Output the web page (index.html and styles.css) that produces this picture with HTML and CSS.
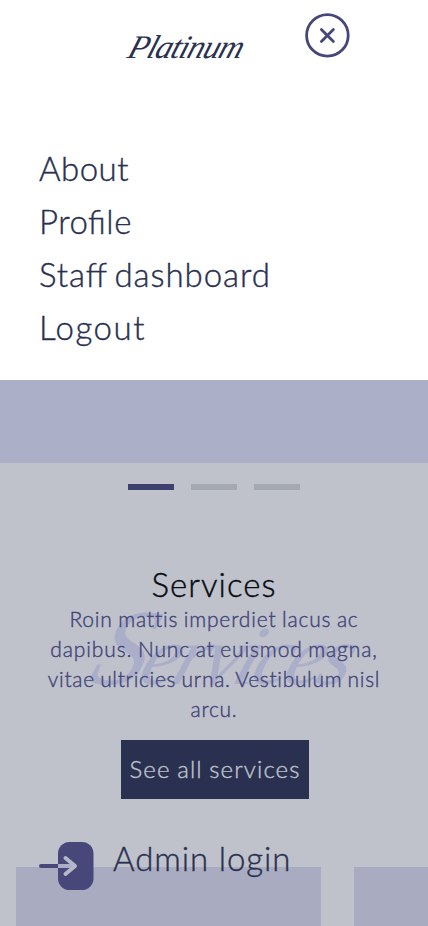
FILE: index.html
```
<!DOCTYPE html>
<html lang="en">
<head>
<meta charset="utf-8">
<meta name="viewport" content="width=device-width, initial-scale=1">
<title>Platinum</title>
<link rel="stylesheet" href="styles.css">
</head>
<body>
<main class="page">
  <section class="hero"></section>
  <div class="slides"><span class="slide active"></span><span class="slide"></span><span class="slide"></span></div>
  <section class="services">
    <h1 class="title">Services</h1>
    <div class="copy">
      <span class="watermark" aria-hidden="true"><span class="initial">S</span>ervices</span>
      <p class="line l1">Roin mattis imperdiet lacus ac</p>
      <p class="line l2">dapibus. Nunc at euismod magna,</p>
      <p class="line l3">vitae ultricies urna. Vestibulum nisl</p>
      <p class="line l4">arcu.</p>
    </div>
    <a class="button">See all services</a>
  </section>
  <div class="cards"><div class="card"></div><div class="card"></div></div>
</main>
<div class="menu">
  <header class="bar">
    <span class="logo">Platinum</span>
    <svg class="close" viewBox="0 0 46 46" width="46" height="46">
      <circle cx="23.4" cy="23.4" r="20.8"/><path d="M17.4 17.4l12 12M29.4 17.4l-12 12"/>
    </svg>
  </header>
  <nav class="nav">
    <a class="about">About</a>
    <a class="profile">Profile</a>
    <a class="staff">Staff dashboard</a>
    <a class="logout">Logout</a>
  </nav>
</div>
<a class="admin">
  <svg class="login" viewBox="0 0 56 50" width="56" height="50">
    <rect x="19" y="1" width="35.5" height="48" rx="11.5"/>
    <path class="tail" d="M2 25h17"/>
    <path class="arrow" d="M19 25h17"/>
    <path class="head" d="M26.5 17l9.5 8-9.5 8"/>
  </svg>
  <span class="adminText">Admin login</span>
</a>
</body>
</html>
```
FILE: styles.css
```
* { box-sizing: border-box; }
body { margin: 0; background: #bfc2cb; font-family: Lato, "Liberation Sans", sans-serif; font-weight: 300; color: #293050; font-feature-settings: "liga" 1; -webkit-text-stroke: .4px currentColor; }
.page { height: 926px; overflow: hidden; display: flex; flex-direction: column; }
.hero { height: 463px; flex: none; background: #abafc7; }
.slides { display: flex; justify-content: center; gap: 17px; padding-top: 21px; }
.slide { width: 46px; height: 6px; background: #a4a8b0; }
.slide.active { background: #3e406d; }
.services { margin-top: 75px; display: flex; flex-direction: column; align-items: center; }
.title { margin: 0; font-size: 33px; line-height: 39px; font-weight: 300; color: #080b13; letter-spacing: 1.05px; }
.copy { position: relative; width: 100%; color: #42447a; font-size: 21px; text-align: center; font-feature-settings: "liga" 0; }
.line { position: relative; margin: 0; line-height: 30px; height: 30px; white-space: nowrap; word-spacing: -1px; }
.l1 { letter-spacing: .83px; }
.l2 { letter-spacing: .88px; }
.l3 { letter-spacing: .68px; }
.l4 { letter-spacing: .7px; }
.watermark { position: absolute; left: 86px; top: 4px; font: italic 400 84px/96px "Liberation Serif", serif; color: #abaec8; transform: skewX(-20deg); transform-origin: 0 80%; white-space: nowrap; letter-spacing: -4.6px; -webkit-text-stroke: 0; }
.initial { font-size: 108px; line-height: 0; }
.button { margin: 16px 0 0 2px; width: 188px; height: 59px; background: #293050; color: #bfc2cb; font-size: 24px; line-height: 57px; text-align: center; white-space: nowrap; letter-spacing: 1.1px; word-spacing: -1px; }
.cards { display: flex; gap: 33px; padding-left: 16px; margin-top: 68px; }
.card { flex: none; width: 305px; height: 59px; background: #a9acc0; }
.menu { position: absolute; left: 0; top: 0; width: 100%; height: 380px; background: #fff; }
.bar { display: flex; height: 142px; }
.logo { width: 187px; margin: 29px 0 0 117px; font: italic 400 33px/36px "Liberation Serif", serif; transform: skewX(-18deg); letter-spacing: -.9px; -webkit-text-stroke: 0; }
.close { margin-top: 12px; fill: none; stroke: #454779; stroke-width: 2.8; stroke-linecap: round; }
.nav { display: flex; flex-direction: column; padding-left: 39px; font-size: 33px; line-height: 53px; white-space: nowrap; }
.about { letter-spacing: .5px; }
.profile { letter-spacing: .5px; }
.staff { letter-spacing: .95px; word-spacing: -3px; }
.logout { letter-spacing: 1.5px; }
.admin { position: absolute; left: 39px; top: 841px; display: flex; font-size: 33px; line-height: 35px; white-space: nowrap; }
.login { fill: none; stroke-linecap: round; stroke-linejoin: round; stroke-width: 4; }
.login rect { fill: #484779; }
.tail { stroke: #484779; }
.arrow { stroke: #abadc4; stroke-linecap: butt; }
.head { stroke: #b5b8c8; }
.adminText { margin-left: 18px; letter-spacing: .9px; }
```
